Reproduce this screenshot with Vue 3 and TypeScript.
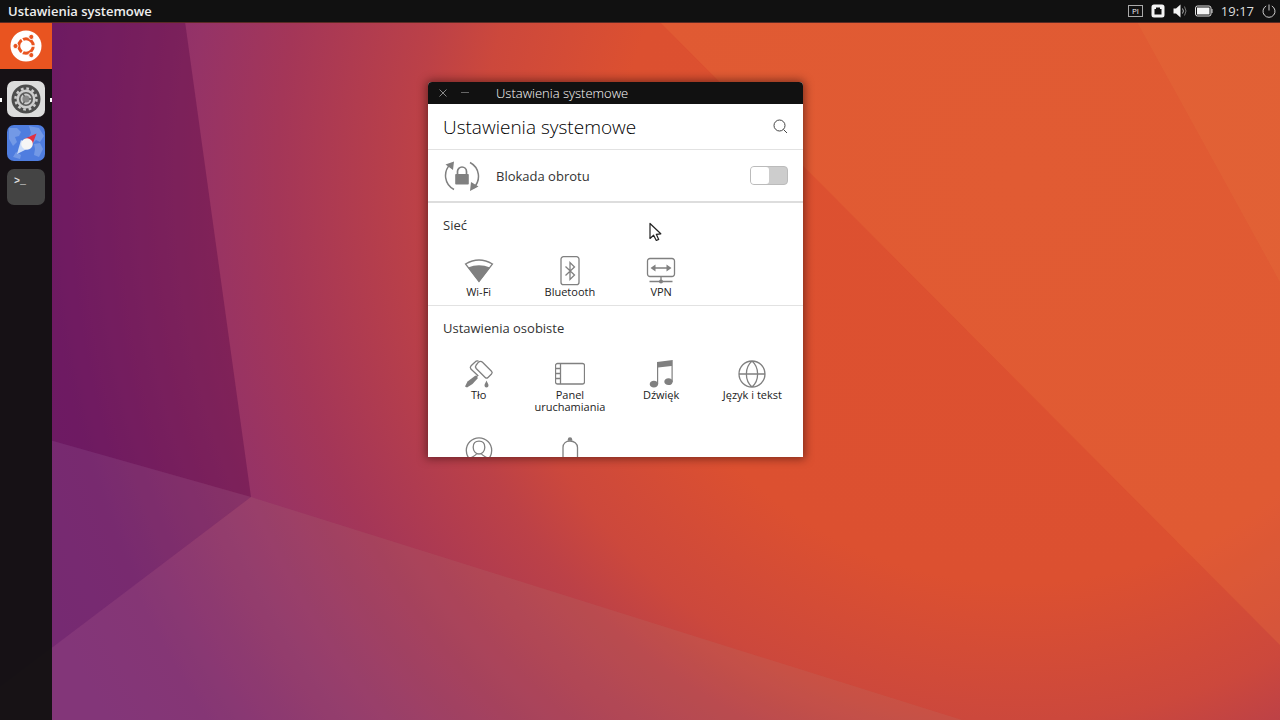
<script setup lang="ts">
import { ref } from 'vue'

interface Shape {
  d: string
  solid?: boolean
}

interface Entry {
  id: string
  label?: string
  shapes: Shape[]
}

interface Section {
  title: string
  entries: Entry[]
}

const rotationLocked = ref(false)

const sections: Section[] = [
  {
    title: 'Sieć',
    entries: [
      {
        id: 'wifi',
        label: 'Wi-Fi',
        shapes: [
          { d: 'M1.5 8Q15 0 28.5 8L15 25.5z' },
          { d: 'M4 11.5Q15 7 26 11.5L15 26z', solid: true },
        ],
      },
      {
        id: 'bluetooth',
        label: 'Bluetooth',
        shapes: [
          { d: 'M8.5 .7h13a2.5 2.5 0 0 1 2.5 2.5v23a2.5 2.5 0 0 1-2.5 2.5h-13a2.5 2.5 0 0 1-2.5-2.5v-23a2.5 2.5 0 0 1 2.5-2.5z' },
          { d: 'M10.5 10.5L19.5 19L15 23.5V6.5L19.5 11L10.5 19.5' },
        ],
      },
      {
        id: 'vpn',
        label: 'VPN',
        shapes: [
          { d: 'M4 2.5h22a2.5 2.5 0 0 1 2.5 2.5v13a2.5 2.5 0 0 1-2.5 2.5h-22a2.5 2.5 0 0 1-2.500-2.500v-13a2.500 2.500 0 0 1 2.500-2.500z' },
          { d: 'M7 12h16M3.500 25.500h23M15 20.500v4' },
          { d: 'M4.500 12l5-3.500v7zM25.500 12l-5-3.500v7zM13 25.500a2 2 0 0 1 4 0a2 2 0 0 1-4 0z', solid: true },
        ],
      },
    ],
  },
  {
    title: 'Ustawienia osobiste',
    entries: [
      {
        id: 'background',
        label: 'Tło',
        shapes: [
          { d: 'M14.500 3.200a2.800 2.800 0 0 1 4 0l9 9a2 2 0 0 1 0 2.800l-3.500 3.500a2 2 0 0 1-2.800 0l-9-9a2.800 2.800 0 0 1 0-3.500z' },
          { d: 'M14.500 2.200c-1.200-.5-2.400-.2-3.400.8l-4 3.800c-1 1-1 2.200-.2 3.300l6.900 6.400l-1.800 1.500' },
          { d: 'M11.500 16.500l2.500 2.500l-5.500 6l-5.500 3.500l-2-1l2.500-5z', solid: true },
          { d: 'M22.500 21.500c.8 2.300 2 3.400 2 4.900a2 2 0 0 1-4 0c0-1.500 1.200-2.600 2-4.900z', solid: true },
        ],
      },
      {
        id: 'launcher',
        label: 'Panel uruchamiania',
        shapes: [
          { d: 'M2.500 4.500h25a2 2 0 0 1 2 2v16.500a2 2 0 0 1-2 2h-25a2 2 0 0 1-2-2v-16.500a2 2 0 0 1 2-2zM5.500 4.500v20.500M.500 9.500h5M.500 14.500h5M.500 19.500h5' },
        ],
      },
      {
        id: 'sound',
        label: 'Dźwięk',
        shapes: [
          { d: 'M11 3L26.700 1V23H25.500V7L12.200 8.600V25H11z', solid: true },
          { d: 'M3.700 25.200c0-2 1.800-3.500 4.200-3.500s4.300 1.500 4.300 3.400s-1.900 3.400-4.300 3.400s-4.200-1.400-4.200-3.300zM18.300 22.800c0-2 1.800-3.500 4.200-3.500s4.200 1.500 4.200 3.400s-1.800 3.400-4.200 3.400s-4.200-1.400-4.200-3.300z', solid: true },
        ],
      },
      {
        id: 'language',
        label: 'Język i tekst',
        shapes: [
          { d: 'M2 15a13 13 0 0 1 26 0a13 13 0 0 1-26 0zM2 15h26M15 2c-7.500 6.500-7.500 19.500 0 26c7.500-6.500 7.500-19.500 0-26z' },
        ],
      },
      {
        id: 'account',
        shapes: [
          { d: 'M2.300 14.500a12.700 12.700 0 0 1 25.400 0a12.700 12.700 0 0 1-25.400 0z' },
          { d: 'M9.200 11.200c0-3.800 2.400-6 5.800-6s5.800 2.200 5.800 6c0 3.900-2.600 6.800-5.800 6.800s-5.800-2.900-5.800-6.800zM12.500 17.500c0 2-3.500 2.500-6.500 5M17.500 17.500c0 2 3.500 2.500 6.500 5' },
        ],
      },
      {
        id: 'notifications',
        shapes: [
          { d: 'M8 24v-12.500c0-4 3-6.500 7-6.500s7.500 2.500 7.500 6.500v12.500z' },
          { d: 'M12.800 4.800v-1.300a2.200 2.200 0 0 1 4.400 0v1.300z', solid: true },
        ],
      },
    ],
  },
]
</script>

<template>
  <div class="desktop">
    <svg class="wallpaper" viewBox="0 0 1280 720" preserveAspectRatio="xMidYMid slice" aria-hidden="true">
      <defs>
        <radialGradient id="glow" gradientUnits="userSpaceOnUse" cx="1020" cy="180" r="1060">
          <stop offset="0" stop-color="#dd5130" />
          <stop offset="0.38" stop-color="#dc5030" />
          <stop offset="0.51" stop-color="#cc483c" />
          <stop offset="0.57" stop-color="#bc4147" />
          <stop offset="0.7" stop-color="#a43658" />
          <stop offset="0.785" stop-color="#953367" />
          <stop offset="0.92" stop-color="#7e2874" />
          <stop offset="1" stop-color="#7c2878" />
        </radialGradient>
      </defs>
      <rect width="1280" height="720" fill="url(#glow)" />
      <path d="M0 0H182L251 497L0 426z" fill="#500040" fill-opacity="0.34" />
      <path d="M0 426L251 497L0 687z" fill="#683464" fill-opacity="0.28" />
      <path d="M0 687L251 497L962 720H0z" fill="#b09080" fill-opacity="0.14" />
      <path d="M638 0L1280 645V0z" fill="#f08040" fill-opacity="0.22" />
      <path d="M1125 0L1280 282V0z" fill="#f0a050" fill-opacity="0.1" />
    </svg>

    <header class="panel">
      <span class="panel-title">Ustawienia systemowe</span>
      <div class="indicators">
        <span class="keyboard">Pl</span>
        <svg width="14" height="14" viewBox="0 0 14 14" aria-hidden="true">
          <path fill="#f4f4f4" fill-rule="evenodd" d="M3 .5h8a2.500 2.500 0 0 1 2.500 2.500v8a2.500 2.500 0 0 1-2.500 2.500h-8a2.500 2.500 0 0 1-2.500-2.500v-8a2.500 2.500 0 0 1 2.500-2.500zM3.500 5v5.500h7v-5.500h-1.500v-1.500h-4v1.500z" />
        </svg>
        <svg width="14" height="14" viewBox="0 0 14 14" aria-hidden="true">
          <path fill="#f4f4f4" d="M.5 4.500h2.500l4.500-4v13l-4.500-4h-2.500z" />
          <path fill="none" stroke="#bbb" d="M9.500 4.500q1.800 2.500 0 5" />
          <path fill="none" stroke="#777" d="M11.500 2.500q3 4.500 0 9" />
        </svg>
        <svg width="18" height="12" viewBox="0 0 18 12" aria-hidden="true">
          <rect x=".5" y="1" width="15.500" height="10" rx="2" fill="none" stroke="#ddd" />
          <rect x="2" y="2.500" width="12.500" height="7" fill="#f4f4f4" />
          <path fill="#ddd" d="M16.500 4h1v4h-1z" />
        </svg>
        <time class="clock">19:17</time>
        <svg width="14" height="14" viewBox="0 0 14 14" fill="none" stroke="#ccc" aria-hidden="true">
          <path d="M4.200 2a6 6 0 1 0 5.600 0M7 .5v6" />
        </svg>
      </div>
    </header>

    <nav class="launcher">
      <button class="dash" type="button">
        <svg width="32" height="32" viewBox="0 0 32 32" aria-hidden="true">
          <circle cx="16" cy="16" r="15.500" fill="#fff" />
          <circle cx="16" cy="16" r="7.300" fill="none" stroke="#e95420" stroke-width="3" />
          <path d="M16 16L26 16M16 16L11 7.300M16 16L11 24.700" stroke="#fff" stroke-width="1.500" />
          <circle cx="16" cy="16" r="5" fill="#fff" />
          <g fill="#e95420" stroke="#fff" stroke-width="1">
            <circle cx="5.500" cy="16" r="2.600" />
            <circle cx="21.300" cy="6.900" r="2.600" />
            <circle cx="21.300" cy="25.100" r="2.600" />
          </g>
        </svg>
      </button>
      <div class="apps">
        <button class="app settings running" type="button">
          <svg width="30" height="30" viewBox="0 0 30 30" aria-hidden="true">
            <circle cx="15" cy="15" r="14.500" fill="#4c4c4c" />
            <circle cx="15" cy="15" r="10.500" fill="none" stroke="#cdcdcd" stroke-width="2.500" stroke-dasharray="2.700 2.798" />
            <circle cx="15" cy="15" r="8.300" fill="#5c5c5c" stroke="#cdcdcd" stroke-width="2.400" />
            <circle cx="15" cy="15" r="4.500" fill="#888" stroke="#ccc" stroke-width="1.800" />
            <path d="M15 15L12 9.800M15 15L12 20.200M15 15H21" stroke="#5c5c5c" stroke-width="1.400" />
            <circle cx="15" cy="15" r="3" fill="#888" />
          </svg>
        </button>
        <button class="app browser" type="button">
          <svg width="38" height="36" viewBox="0 0 38 36" aria-hidden="true">
            <path fill="#7399e6" d="M2 3l8 0l4 4l-2 4l-4 1l2 5l-4 4l-4-7zM22 1l10 2l5 8l-4 6l-4-2l-3 3l-4-6l2-4zM27 19l6-1l3 6l-4 8l-5-2l1-6zM9 27l5 3l-1 4l-7-2z" />
            <path fill="#e2303f" d="M29.500 8.500L25 20.500L17 14z" />
            <path fill="#cbdcfa" d="M10 29L14 15L24 22z" />
            <circle cx="20" cy="19" r="5.800" fill="#f6f5f5" />
          </svg>
        </button>
        <button class="app terminal" type="button">&gt;_</button>
      </div>
    </nav>

    <main class="window">
      <div class="titlebar">
        <button class="control" type="button">
          <svg width="8" height="8" viewBox="0 0 8 8" aria-hidden="true"><path d="M.5 .5l7 7M7.500 .5l-7 7" stroke="#888" /></svg>
        </button>
        <button class="control" type="button">
          <svg width="8" height="8" viewBox="0 0 8 8" aria-hidden="true"><path d="M0 3.500h8" stroke="#666" /></svg>
        </button>
        <span class="window-title">Ustawienia systemowe</span>
      </div>

      <div class="page-head">
        <h1>Ustawienia systemowe</h1>
        <button class="search" type="button">
          <svg width="15" height="15" viewBox="0 0 15 15" fill="none" stroke="#444" aria-hidden="true">
            <circle cx="6.500" cy="6.500" r="5.500" />
            <path d="M10.500 10.500l3.500 3.500" />
          </svg>
        </button>
      </div>

      <label class="rotation">
        <svg class="rotation-icon" width="36" height="32" viewBox="0 0 36 32" aria-hidden="true">
          <g fill="none" stroke="#808080" stroke-width="1.500">
            <path d="M10 29.500C.5 24.500-1.500 12 6.500 4" />
            <path d="M26 2.500C35.500 7.500 37.500 20 29.500 28" />
            <path d="M13.500 15.500v-4a4.500 4.500 0 0 1 9 0v4" stroke-width="1.700" />
          </g>
          <path fill="#808080" d="M1.500 4.500L10 1.500L9 10zM34.500 26.500L26 31L27 22zM12 14h12a.8 .8 0 0 1 .8 .8v9a.8 .8 0 0 1-.8 .8h-12a.8 .8 0 0 1-.8-.8v-9a.8 .8 0 0 1 .8-.8z" />
        </svg>
        <span>Blokada obrotu</span>
        <input v-model="rotationLocked" class="switch" type="checkbox" role="switch" />
      </label>

      <section v-for="section in sections" :key="section.title" class="group">
        <h2>{{ section.title }}</h2>
        <div class="grid">
          <button v-for="entry in section.entries" :key="entry.id" class="entry" type="button">
            <svg width="30" height="30" viewBox="0 0 30 30" aria-hidden="true">
              <path v-for="(shape, i) in entry.shapes" :key="i" :d="shape.d" :class="shape.solid ? 'solid' : 'line'" />
            </svg>
            <span v-if="entry.label">{{ entry.label }}</span>
          </button>
        </div>
      </section>
    </main>

    <svg class="pointer" width="13" height="20" viewBox="0 0 13 20" aria-hidden="true">
      <path fill="#fff" stroke="#222" stroke-width="1.200" stroke-linejoin="round" d="M1 1.500V16.500L4.600 13.200L7.300 18.500L9.700 17.400L7.300 12.300L11.800 11.800z" />
    </svg>
  </div>
</template>

<style>
body {
  margin: 0;
}
</style>

<style scoped>
.desktop {
  position: relative;
  display: flex;
  flex-direction: column;
  height: 100vh;
  overflow: hidden;
  font-family: "Open Sans", "Noto Sans", sans-serif;
  color: #222;
}

button {
  display: flex;
  align-items: center;
  justify-content: center;
  margin: 0;
  padding: 0;
  border: 0;
  background: none;
  font: inherit;
  color: inherit;
}

svg {
  display: block;
  flex: none;
}

.wallpaper {
  position: absolute;
  inset: 0;
  width: 100%;
  height: 100%;
}

.panel {
  position: relative;
  display: flex;
  align-items: center;
  justify-content: space-between;
  height: 22px;
  flex: none;
  padding: 0 4px 0 8px;
  border-bottom: 1px solid #5a2a24;
  background: #111;
  color: #eee;
}

.panel-title {
  font-size: 13px;
  font-weight: 600;
}

.indicators {
  display: flex;
  align-items: center;
  gap: 8px;
}

.keyboard {
  width: 13px;
  border: 1px solid #aaa;
  font-size: 8px;
  line-height: 10px;
  text-align: center;
}

.clock {
  font-size: 13px;
  color: #ddd;
}

.launcher {
  position: relative;
  flex: 1;
  width: 52px;
  background: rgba(20, 17, 19, 0.98);
}

.dash {
  width: 52px;
  height: 46px;
  background: #e95420;
}

.apps {
  display: flex;
  flex-direction: column;
  align-items: center;
  gap: 8px;
  padding-top: 12px;
}

.app {
  width: 38px;
  height: 36px;
  border-radius: 7px;
}

.settings {
  background: #dcdcdc;
}

.running {
  position: relative;
}

.running::before,
.running::after {
  content: "";
  position: absolute;
  top: 17px;
  width: 2px;
  height: 4px;
  background: #fff;
}

.running::before {
  left: -7px;
}

.running::after {
  right: -7px;
}

.browser {
  overflow: hidden;
  background: #4f7ddf;
}

.terminal {
  align-items: flex-start;
  justify-content: flex-start;
  padding: 7px;
  background: #444;
  color: #ddd;
  font: bold 10px/12px "Liberation Mono", monospace;
}

.window {
  position: absolute;
  left: 428px;
  top: 82px;
  width: 375px;
  height: 375px;
  overflow: hidden;
  border-radius: 4px 4px 0 0;
  background: #fff;
  box-shadow: 0 0 8px 2px rgba(40, 10, 10, 0.5);
}

.titlebar {
  display: flex;
  align-items: center;
  height: 22px;
  padding-left: 4px;
  background: #111;
  color: #fff;
}

.control {
  width: 22px;
  height: 22px;
}

.window-title {
  margin-left: 20px;
  font-size: 13px;
  font-weight: 300;
}

.page-head {
  display: flex;
  align-items: center;
  justify-content: space-between;
  height: 45px;
  padding: 0 15px;
  border-bottom: 1px solid #e2e2e2;
}

h1 {
  margin: 0;
  font-size: 19px;
  font-weight: 300;
  color: #000;
}

.rotation {
  display: flex;
  align-items: center;
  height: 51px;
  padding: 0 15px 0 16px;
  border-bottom: 2px solid #ddd;
  font-size: 13px;
}

.rotation-icon {
  margin-right: 16px;
}

.switch {
  appearance: none;
  display: flex;
  width: 38px;
  height: 19px;
  margin: 0 0 0 auto;
  border: 1px solid #bbb;
  border-radius: 4px;
  background: #cdcdcd;
}

.switch::before {
  content: "";
  width: 18px;
  border-radius: 3px;
  background: #fff;
}

.switch:checked {
  justify-content: flex-end;
  background: #3eb34f;
}

.group {
  padding-bottom: 7px;
  border-bottom: 1px solid #e2e2e2;
}

h2 {
  margin: 0;
  padding-left: 15px;
  font-size: 13px;
  font-weight: 400;
  line-height: 45px;
}

h2,
.rotation {
  color: #333;
}

.grid {
  display: grid;
  grid-template-columns: repeat(4, minmax(0, 1fr));
  row-gap: 23px;
  padding: 8px 5px 0;
}

.entry {
  flex-direction: column;
  justify-content: flex-start;
  padding: 0 8px;
  font-size: 11px;
  line-height: 12px;
}

.line {
  fill: none;
  stroke: #808080;
  stroke-width: 1.3px;
}

.solid {
  fill: #808080;
}

.pointer {
  position: absolute;
  left: 649px;
  top: 222px;
}
</style>
